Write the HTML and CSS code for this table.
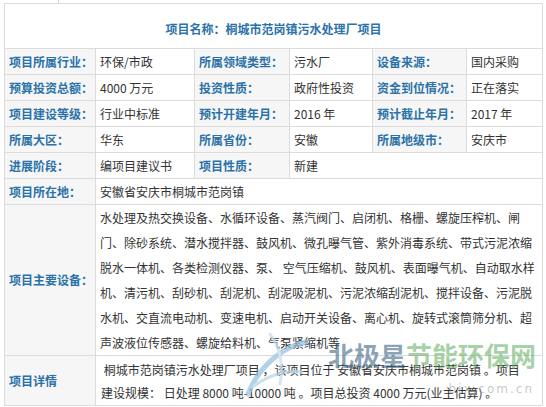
FILE: index.html
```html
<!DOCTYPE html>
<html lang="zh">
<head>
<meta charset="utf-8">
<link rel="stylesheet" href="styles.css">
</head>
<body>
<div class="page">
  <div class="tick"></div>
  <table class="info">
    <colgroup>
      <col class="c1"><col class="c2"><col class="c3"><col class="c4"><col class="c5"><col class="c6">
    </colgroup>
    <tr class="r-title"><td colspan="6" class="title">项目名称：桐城市范岗镇污水处理厂项目</td></tr>
    <tr class="r"><td class="lab">项目所属行业：</td><td>环保/市政</td><td class="lab">所属领域类型：</td><td>污水厂</td><td class="lab">设备来源：</td><td>国内采购</td></tr>
    <tr class="r"><td class="lab">预算投资总额：</td><td>4000 万元</td><td class="lab">投资性质：</td><td>政府性投资</td><td class="lab">资金到位情况：</td><td>正在落实</td></tr>
    <tr class="r"><td class="lab">项目建设等级：</td><td>行业中标准</td><td class="lab">预计开建年月：</td><td>2016 年</td><td class="lab">预计截止年月：</td><td>2017 年</td></tr>
    <tr class="r"><td class="lab">所属大区：</td><td>华东</td><td class="lab">所属省份：</td><td>安徽</td><td class="lab">所属地级市：</td><td>安庆市</td></tr>
    <tr class="r"><td class="lab">进展阶段：</td><td>编项目建议书</td><td class="lab">项目性质：</td><td colspan="3">新建</td></tr>
    <tr class="r"><td class="lab">项目所在地：</td><td colspan="5">安徽省安庆市桐城市范岗镇</td></tr>
    <tr class="r-equip"><td class="lab">项目主要设备：</td><td colspan="5" class="long">水处理及热交换设备、水循环设备、蒸汽阀门、启闭机、格栅、螺旋压榨机、闸门、除砂系统、潜水搅拌器、鼓风机、微孔曝气管、紫外消毒系统、带式污泥浓缩脱水一体机、各类检测仪器、泵、 空气压缩机、鼓风机、表面曝气机、自动取水样机、清污机、刮砂机、刮泥机、刮泥吸泥机、污泥浓缩刮泥机、搅拌设备、污泥脱水机、交直流电动机、变速电机、启动开关设备、离心机、旋转式滚筒筛分机、超声波液位传感器、螺旋给料机、气泵紧缩机等</td></tr>
    <tr class="r-detail"><td class="lab">项目详情</td><td colspan="5" class="detail">&nbsp;桐城市范岗镇污水处理厂项目 ，该项目位于 安徽省安庆市桐城市范岗镇 。项目建设规模： 日处理 8000 吨-10000 吨 。项目总投资 4000 万元(业主估算) 。</td></tr>
  </table>
  <div class="wm">
    <svg class="wm-logo" width="70" height="80" viewBox="0 0 70 80">
      <path d="M8 70 C 20 40, 45 22, 66 18" fill="none" stroke="#9cc3e0" stroke-width="5" stroke-linecap="round"/>
      <path d="M14 62 C 30 50, 48 46, 62 48" fill="none" stroke="#b9d6ea" stroke-width="3" stroke-linecap="round"/>
      <path d="M30 10 C 40 24, 44 40, 40 60" fill="none" stroke="#c8dfee" stroke-width="3" stroke-linecap="round"/>
    </svg>
    <div class="wm-text"><span class="wm-a">北极星</span><span class="wm-b">节能环保网</span></div>
    <div class="wm-url">bjx.com.cn</div>
  </div>
</div>
</body>
</html>
```
FILE: styles.css
```css
html, body {
  margin: 0;
  padding: 0;
  background: #ffffff;
}
body {
  width: 546px;
  height: 407px;
  overflow: hidden;
  font-family: "Noto Sans CJK SC", "Noto Sans", sans-serif;
  font-size: 12px;
  color: #333333;
}
.page {
  position: relative;
  width: 546px;
  height: 407px;
}
.tick {
  width: 1px;
  height: 3px;
  margin-left: 58px;
  background: #d6d6d6;
}
.info {
  margin-left: 4px;
  width: 538px;
  table-layout: fixed;
  border-collapse: collapse;
}
.c1 { width: 91px; }
.c2 { width: 99px; }
.c3 { width: 95px; }
.c4 { width: 83px; }
.c5 { width: 94px; }
.c6 { width: 76px; }
.info td {
  border: 1px solid #dcdcdc;
  padding: 0 4px;
  vertical-align: middle;
  line-height: 16px;
  white-space: nowrap;
  overflow: hidden;
}
.r-title td { height: 39px; }
.r td { height: 25px; }
.r-equip td { height: 150px; }
.r-detail td { height: 49px; }
.info td.title {
  text-align: center;
  font-weight: bold;
  color: #2a72a8;
  padding-top: 5px;
}
.lab {
  font-weight: bold;
  color: #2a72a8;
  background: #f6f6f6;
}
.info td.long {
  white-space: normal;
  line-height: 25px;
  padding: 0 3px 0 4px;
}
.info td.detail {
  white-space: normal;
  line-height: 23px;
  padding: 0 15px 0 5px;
}
.wm {
  position: absolute;
  left: 240px;
  top: 322px;
  width: 306px;
  height: 85px;
  pointer-events: none;
}
.wm-logo {
  position: absolute;
  left: 0;
  top: 2px;
  opacity: 0.75;
}
.wm-text {
  position: absolute;
  left: 88px;
  top: 18px;
  font-size: 26px;
  font-weight: bold;
  line-height: 30px;
  letter-spacing: 0px;
  white-space: nowrap;
}
.wm-a { color: rgba(60, 100, 135, 0.6); }
.wm-b { color: rgba(90, 170, 90, 0.55); }
.wm-url {
  position: absolute;
  right: 12px;
  top: 60px;
  font-family: "DejaVu Sans", sans-serif;
  font-size: 12px;
  letter-spacing: 2px;
  color: rgba(150, 150, 150, 0.55);
}
```
